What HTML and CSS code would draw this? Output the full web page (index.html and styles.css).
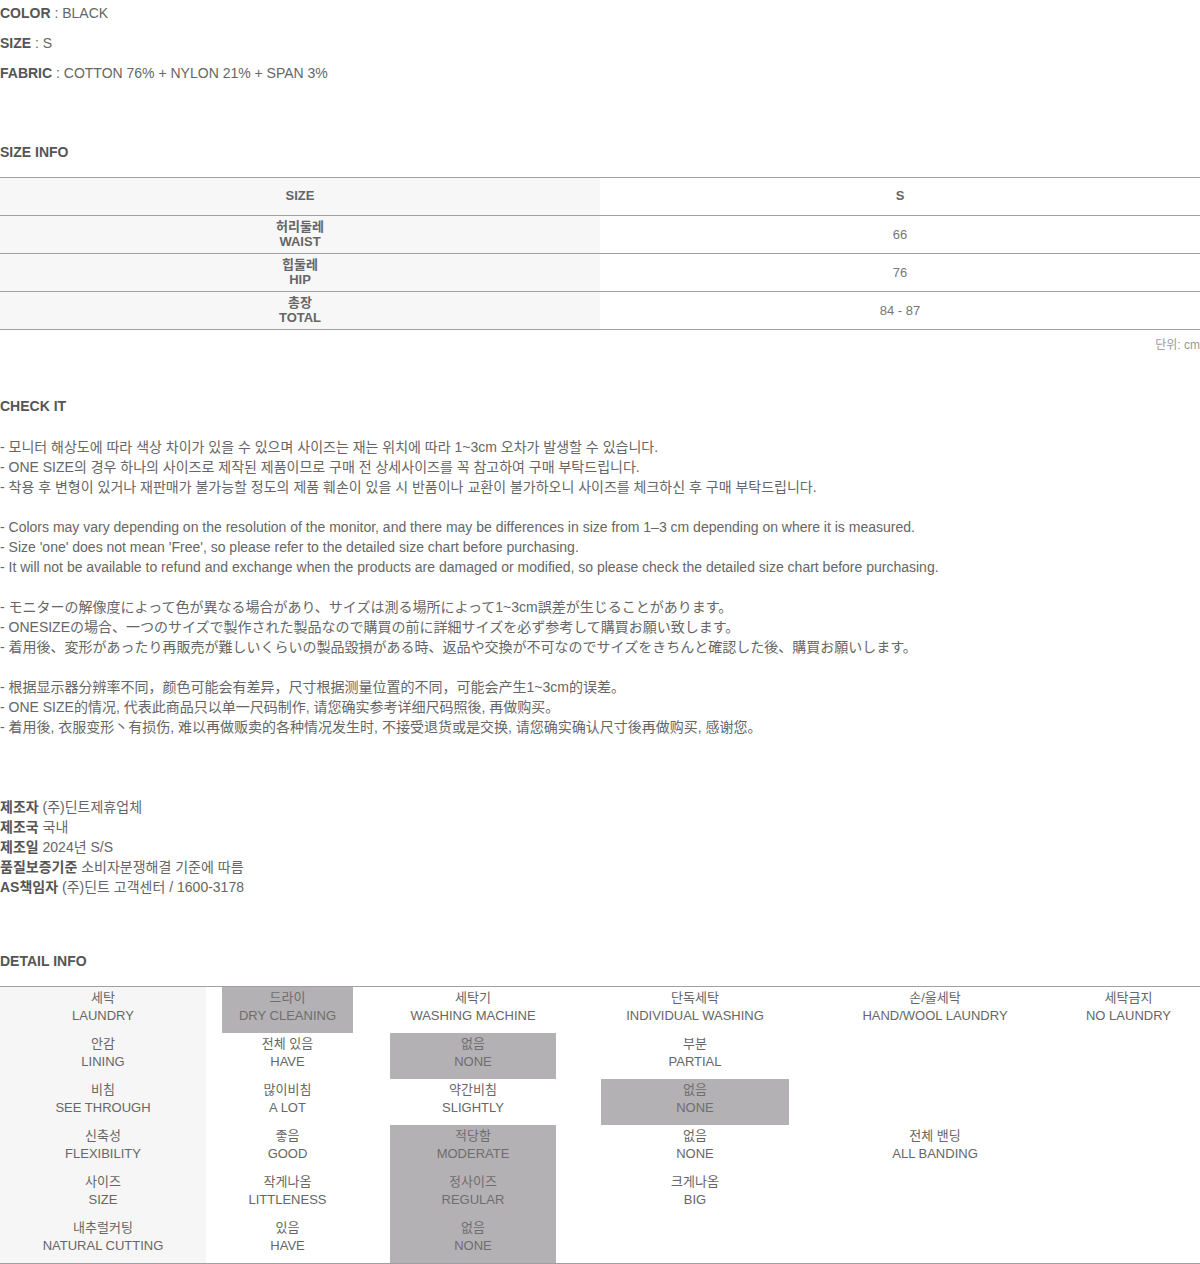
FILE: index.html
```html
<!DOCTYPE html>
<html lang="ko">
<head>
<meta charset="utf-8">
<link rel="stylesheet" href="styles.css">
</head>
<body>
<section class="spec">
  <div class="spec-line"><b>COLOR</b> : BLACK</div>
  <div class="spec-line"><b>SIZE</b> : S</div>
  <div class="spec-line"><b>FABRIC</b> : COTTON 76% + NYLON 21% + SPAN 3%</div>
</section>

<h2 class="heading heading-size">SIZE INFO</h2>
<div class="size-table">
  <div class="size-row size-head">
    <div class="size-label">SIZE</div>
    <div class="size-val">S</div>
  </div>
  <div class="size-row">
    <div class="size-label">허리둘레<br>WAIST</div>
    <div class="size-val">66</div>
  </div>
  <div class="size-row">
    <div class="size-label">힙둘레<br>HIP</div>
    <div class="size-val">76</div>
  </div>
  <div class="size-row">
    <div class="size-label">총장<br>TOTAL</div>
    <div class="size-val">84 - 87</div>
  </div>
</div>
<div class="unit">단위: cm</div>

<h2 class="heading heading-check">CHECK IT</h2>
<div class="check">
  <p class="kr">- 모니터 해상도에 따라 색상 차이가 있을 수 있으며 사이즈는 재는 위치에 따라 1~3cm 오차가 발생할 수 있습니다.<br>
  - ONE SIZE의 경우 하나의 사이즈로 제작된 제품이므로 구매 전 상세사이즈를 꼭 참고하여 구매 부탁드립니다.<br>
  - 착용 후 변형이 있거나 재판매가 불가능할 정도의 제품 훼손이 있을 시 반품이나 교환이 불가하오니 사이즈를 체크하신 후 구매 부탁드립니다.</p>
  <p>- Colors may vary depending on the resolution of the monitor, and there may be differences in size from 1–3 cm depending on where it is measured.<br>
  - Size 'one' does not mean 'Free', so please refer to the detailed size chart before purchasing.<br>
  - It will not be available to refund and exchange when the products are damaged or modified, so please check the detailed size chart before purchasing.</p>
  <p class="jp" lang="ja">- モニターの解像度によって色が異なる場合があり、サイズは測る場所によって1~3cm誤差が生じることがあります。<br>
  - ONESIZEの場合、一つのサイズで製作された製品なので購買の前に詳細サイズを必ず参考して購買お願い致します。<br>
  - 着用後、変形があったり再販売が難しいくらいの製品毀損がある時、返品や交換が不可なのでサイズをきちんと確認した後、購買お願いします。</p>
  <p class="cn" lang="zh-CN">- 根据显示器分辨率不同，颜色可能会有差异，尺寸根据测量位置的不同，可能会产生1~3cm的误差。<br>
  - ONE SIZE的情况, 代表此商品只以单一尺码制作, 请您确实参考详细尺码照後, 再做购买。<br>
  - 着用後, 衣服变形丶有损伤, 难以再做贩卖的各种情况发生时, 不接受退货或是交换, 请您确实确认尺寸後再做购买, 感谢您。</p>
</div>

<div class="maker">
  <div><b>제조자</b> (주)딘트제휴업체</div>
  <div><b>제조국</b> 국내</div>
  <div><b>제조일</b> 2024년 S/S</div>
  <div><b>품질보증기준</b> 소비자분쟁해결 기준에 따름</div>
  <div><b>AS책임자</b> (주)딘트 고객센터 / 1600-3178</div>
</div>

<h2 class="heading heading-detail">DETAIL INFO</h2>
<div class="detail">
  <div class="cell first">세탁<br>LAUNDRY</div>
  <div class="cell"><span class="hl">드라이<br>DRY CLEANING</span></div>
  <div class="cell">세탁기<br>WASHING MACHINE</div>
  <div class="cell">단독세탁<br>INDIVIDUAL WASHING</div>
  <div class="cell">손/울세탁<br>HAND/WOOL LAUNDRY</div>
  <div class="cell">세탁금지<br>NO LAUNDRY</div>

  <div class="cell first">안감<br>LINING</div>
  <div class="cell">전체 있음<br>HAVE</div>
  <div class="cell"><span class="hl">없음<br>NONE</span></div>
  <div class="cell">부분<br>PARTIAL</div>
  <div class="cell"></div>
  <div class="cell"></div>

  <div class="cell first">비침<br>SEE THROUGH</div>
  <div class="cell">많이비침<br>A LOT</div>
  <div class="cell">약간비침<br>SLIGHTLY</div>
  <div class="cell"><span class="hl">없음<br>NONE</span></div>
  <div class="cell"></div>
  <div class="cell"></div>

  <div class="cell first">신축성<br>FLEXIBILITY</div>
  <div class="cell">좋음<br>GOOD</div>
  <div class="cell"><span class="hl">적당함<br>MODERATE</span></div>
  <div class="cell">없음<br>NONE</div>
  <div class="cell">전체 밴딩<br>ALL BANDING</div>
  <div class="cell"></div>

  <div class="cell first">사이즈<br>SIZE</div>
  <div class="cell">작게나옴<br>LITTLENESS</div>
  <div class="cell"><span class="hl">정사이즈<br>REGULAR</span></div>
  <div class="cell">크게나옴<br>BIG</div>
  <div class="cell"></div>
  <div class="cell"></div>

  <div class="cell first">내추럴커팅<br>NATURAL CUTTING</div>
  <div class="cell">있음<br>HAVE</div>
  <div class="cell"><span class="hl">없음<br>NONE</span></div>
  <div class="cell"></div>
  <div class="cell"></div>
  <div class="cell"></div>
</div>
</body>
</html>
```

FILE: styles.css
```css
* { box-sizing: border-box; }

html, body {
  margin: 0;
  padding: 0;
  background: #fff;
}

body {
  width: 1200px;
  font-family: "Liberation Sans", "Noto Sans CJK KR", sans-serif;
  font-size: 14px;
  color: #666;
}

b { font-weight: bold; color: #555; }

.spec { margin-top: -2px; }

.spec-line {
  line-height: 30px;
  height: 30px;
}

.heading {
  margin: 0;
  font-size: 14px;
  font-weight: bold;
  line-height: 20px;
  color: #555;
}

.heading-size { margin-top: 54px; }
.heading-check { margin-top: 42px; }
.heading-detail { margin-top: 54px; }

.size-table {
  margin-top: 15px;
  border-top: 1px solid #a0a0a0;
}

.size-row {
  display: grid;
  grid-template-columns: 600px 600px;
  height: 38px;
  border-bottom: 1px solid #a0a0a0;
  font-size: 13px;
  line-height: 15px;
}

.size-label {
  background: #f7f7f7;
  font-weight: bold;
  color: #666;
  display: flex;
  align-items: center;
  justify-content: center;
  text-align: center;
  padding-bottom: 1px;
}

.size-val {
  display: flex;
  align-items: center;
  justify-content: center;
  color: #777;
}

.size-head .size-label,
.size-head .size-val {
  font-weight: bold;
  color: #666;
  padding-bottom: 3px;
}

.unit {
  margin-top: 6px;
  text-align: right;
  font-size: 12px;
  line-height: 18px;
  color: #999;
}

.check {
  margin-top: 21px;
  line-height: 20px;
  color: #666;
}

.check p { margin: 0 0 20px; }
.check p:last-child { margin-bottom: 0; }

.jp { font-family: "Liberation Sans", "Noto Sans CJK JP", sans-serif; }
.cn { font-family: "Liberation Sans", "Noto Sans CJK SC", sans-serif; }

.maker {
  margin-top: 60px;
  line-height: 20px;
  color: #666;
}

.detail {
  margin-top: 15px;
  display: grid;
  grid-template-columns: 206px 163px 208px 236px 244px 143px;
  grid-auto-rows: 46px;
  border-top: 1px solid #a0a0a0;
  border-bottom: 1px solid #a0a0a0;
  font-size: 13px;
  line-height: 18px;
  color: #666;
}

.cell {
  display: flex;
  justify-content: center;
  align-items: stretch;
  text-align: center;
  padding-top: 2px;
}

.cell.first { background: #f6f6f6; }

.hl {
  display: block;
  width: 80%;
  margin-top: -2px;
  padding-top: 2px;
  background: #b3b1b3;
  color: #6e6e6e;
}
```
